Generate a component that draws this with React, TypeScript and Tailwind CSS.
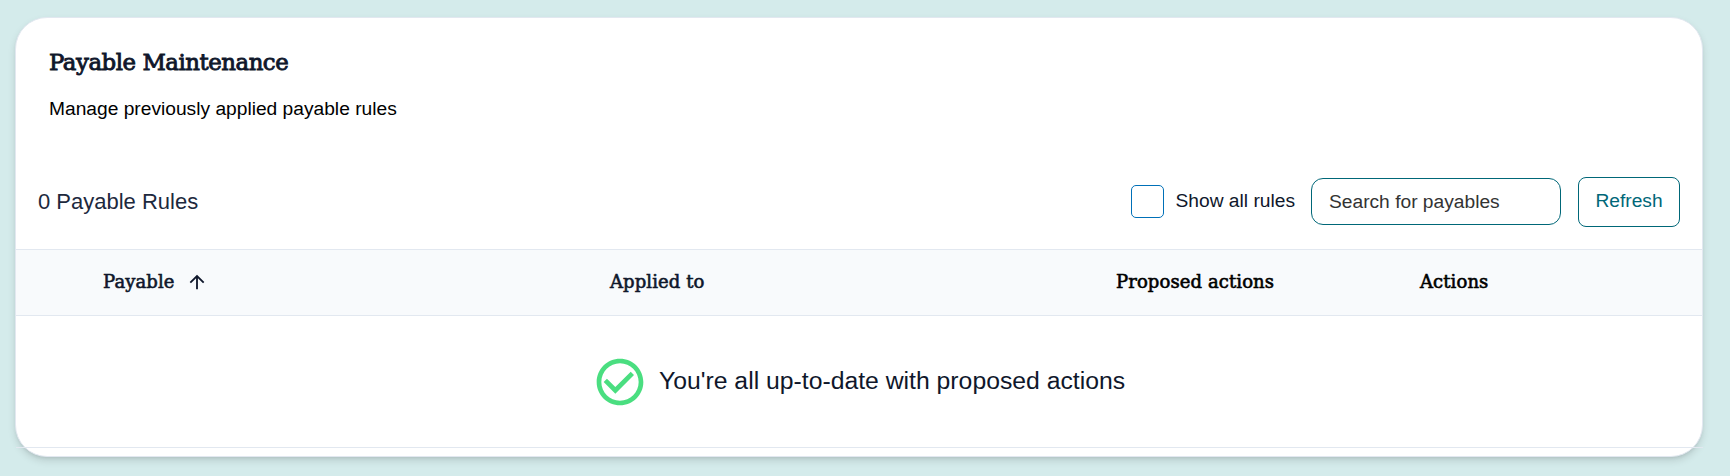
import { MdArrowUpward, MdCheckCircleOutline } from "react-icons/md";

const slab = "[font-family:'DejaVu_Serif',serif]";

export default function App() {
  return (
    <div className="h-[476px] w-full bg-[#d4ebeb] pt-[17px] pl-[15px] font-['Liberation_Sans',Arial,sans-serif] text-slate-900">
      <section className="flex h-[440px] w-[1688px] flex-col rounded-[32px] border border-slate-200 bg-white shadow-[0_4px_8px_-1px_rgba(0,0,0,0.14),0_2px_4px_-2px_rgba(0,0,0,0.12)]">
        <header className="h-[136px] pt-[26px] pl-[33px]">
          <h1 className={`${slab} text-[22.8px] leading-9 tracking-[-0.45px] whitespace-nowrap [-webkit-text-stroke:0.9px_currentColor]`}>Payable Maintenance</h1>
          <p className="mt-[15px] text-[19.2px] leading-7 text-black">Manage previously applied payable rules</p>
        </header>
        <div className="flex h-[95px] items-center pr-[22px] pl-[22px]">
          <h2 className="mr-auto text-[22px] text-slate-800">0 Payable Rules</h2>
          <label className="mr-4 flex items-center pb-[1px]">
            <input type="checkbox" className="size-[33px] appearance-none rounded-[5px] border border-[#0070b8] bg-white" />
            <span className="ml-3 text-[19.2px]">Show all rules</span>
          </label>
          <input
            placeholder="Search for payables"
            className="mb-[1px] h-[47px] w-[250px] rounded-xl border border-[#006778] bg-white px-[17px] pt-[1px] text-[19.2px] placeholder:text-[#333]"
          />
          <button className="ml-[17px] h-[50px] w-[102px] rounded-lg border border-[#006778] text-[19.2px] text-[#006778]">Refresh</button>
        </div>
        <div className={`${slab} flex h-[67px] shrink-0 items-center border-y border-slate-200 bg-slate-50 pb-[2px] pl-[87px] text-[18px] tracking-[0.1px] text-black [-webkit-text-stroke:0.6px_currentColor]`}>
          <div className="flex w-[507px] items-center gap-[11px] text-slate-900">
            <span>Payable</span>
            <MdArrowUpward size={22} className="mt-[1px] [-webkit-text-stroke:0]" />
          </div>
          <div className="w-[506px] text-slate-900">Applied to</div>
          <div className="w-[304px]">Proposed actions</div>
          <div>Actions</div>
        </div>
        <div className="-mr-px flex h-[132px] items-center border-b border-slate-200 pl-[576px]">
          <MdCheckCircleOutline size={56} className="text-[#4ade80]" />
          <span className="ml-[11px] pb-[2px] text-[24.75px]">You're all up-to-date with proposed actions</span>
        </div>
      </section>
    </div>
  );
}
